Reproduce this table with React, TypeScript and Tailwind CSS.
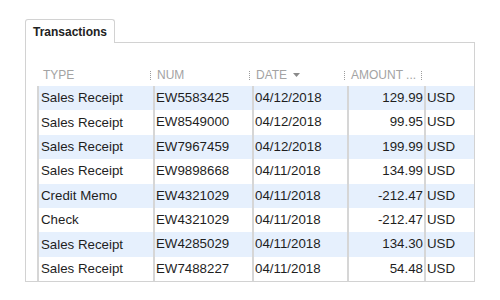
import type { ReactNode } from "react";

const rows = [
  ["Sales Receipt", "EW5583425", "04/12/2018", "129.99"],
  ["Sales Receipt", "EW8549000", "04/12/2018", "99.95"],
  ["Sales Receipt", "EW7967459", "04/12/2018", "199.99"],
  ["Sales Receipt", "EW9898668", "04/11/2018", "134.99"],
  ["Credit Memo", "EW4321029", "04/11/2018", "-212.47"],
  ["Check", "EW4321029", "04/11/2018", "-212.47"],
  ["Sales Receipt", "EW4285029", "04/11/2018", "134.30"],
  ["Sales Receipt", "EW7488227", "04/11/2018", "54.48"],
];

/** Poignée de redimensionnement : petite colonne de points. */
function Grip() {
  return (
    <svg width="3" height="9" viewBox="0 0 3 9" className="shrink-0">
      {[0, 2, 4, 6, 8].map((y) => (
        <rect key={y} x="1" y={y} width="1" height="1" fill="#9c9c9c" />
      ))}
    </svg>
  );
}

function HeadCell({ children, grip = true, className = "" }: { children?: ReactNode; grip?: boolean; className?: string }) {
  return (
    <div className={`flex items-center justify-between pr-[1px] ${className}`}>
      <div className="flex items-center">{children}</div>
      {grip && <Grip />}
    </div>
  );
}

export default function App() {
  return (
    <div className="h-[300px] w-[500px] bg-white pt-[19px] font-['Liberation_Sans',Arial,sans-serif]">
      <div className="ml-[25px] w-[450px]">
        <div className="relative z-10 -mb-px flex h-[24px] w-[90px] items-center justify-center rounded-t-[3px] border border-b-0 border-[#d2d2d2] bg-white text-[12px] font-bold text-[#222]">
          Transactions
        </div>
        <div className="h-[240px] border border-[#d2d2d2] pl-[11px]">
          <div className="grid h-[43px] grid-cols-[116px_99px_95px_77px_50px] items-end pb-[2px] text-[12px] text-[#a3a3a3]">
            <HeadCell className="pl-[6px]">TYPE</HeadCell>
            <HeadCell className="pl-[4px]">NUM</HeadCell>
            <HeadCell className="pl-[4px]">
              DATE
              <svg width="7" height="4" viewBox="0 0 7 4" className="ml-[6px]">
                <path d="M0 0h7L3.5 4z" fill="#8a8a8a" />
              </svg>
            </HeadCell>
            <HeadCell className="pl-[4px]">AMOUNT ...</HeadCell>
            <HeadCell grip={false} />
          </div>
          <div className="border-l-2 border-[#d6d6d6] text-[13.3px] text-[#1e1e1e]">
            {rows.map(([type, num, date, amount], i) => (
              <div
                key={i}
                className={`grid h-[24.4px] grid-cols-[114px_99px_95px_77px_50px] items-center ${
                  i % 2 === 0 ? "bg-[#e6f0fd]" : "bg-white"
                }`}
              >
                <div className="pl-[2px]">{type}</div>
                <div className="h-full border-l-2 border-[#d6d6d6] pl-[1px] leading-[24.4px]">{num}</div>
                <div className="h-full border-l-2 border-[#d6d6d6] pl-[1px] leading-[24.4px]">{date}</div>
                <div className="h-full border-l-2 border-[#d6d6d6] pr-[1px] text-right leading-[24.4px]">{amount}</div>
                <div className="h-full border-l-2 border-[#d6d6d6] pl-[1px] leading-[24.4px]">USD</div>
              </div>
            ))}
          </div>
        </div>
      </div>
    </div>
  );
}
